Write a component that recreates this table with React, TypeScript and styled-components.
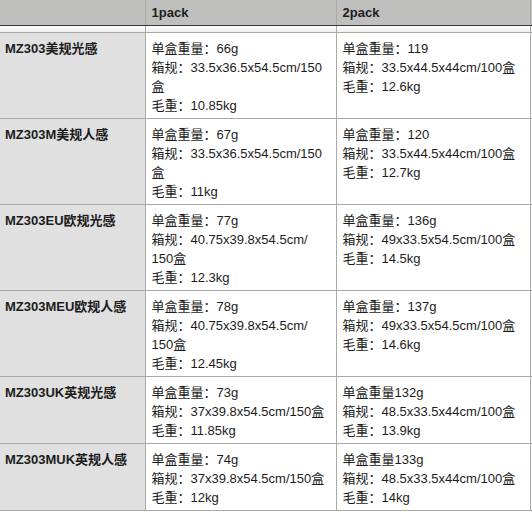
import React from "react";
import styled, { createGlobalStyle } from "styled-components";

type Row = {
  label: string;
  packs: string[][];
};

// "/" gets a zero-width space so long box sizes can wrap after it
const rows: Row[] = [
  {
    label: "MZ303美规光感",
    packs: [
      ["单盒重量：66g", "箱规：33.5x36.5x54.5cm/\u200b150盒", "毛重：10.85kg"],
      ["单盒重量：119", "箱规：33.5x44.5x44cm/\u200b100盒", "毛重：12.6kg"],
    ],
  },
  {
    label: "MZ303M美规人感",
    packs: [
      ["单盒重量：67g", "箱规：33.5x36.5x54.5cm/\u200b150盒", "毛重：11kg"],
      ["单盒重量：120", "箱规：33.5x44.5x44cm/\u200b100盒", "毛重：12.7kg"],
    ],
  },
  {
    label: "MZ303EU欧规光感",
    packs: [
      ["单盒重量：77g", "箱规：40.75x39.8x54.5cm/\u200b150盒", "毛重：12.3kg"],
      ["单盒重量：136g", "箱规：49x33.5x54.5cm/\u200b100盒", "毛重：14.5kg"],
    ],
  },
  {
    label: "MZ303MEU欧规人感",
    packs: [
      ["单盒重量：78g", "箱规：40.75x39.8x54.5cm/\u200b150盒", "毛重：12.45kg"],
      ["单盒重量：137g", "箱规：49x33.5x54.5cm/\u200b100盒", "毛重：14.6kg"],
    ],
  },
  {
    label: "MZ303UK英规光感",
    packs: [
      ["单盒重量：73g", "箱规：37x39.8x54.5cm/\u200b150盒", "毛重：11.85kg"],
      ["单盒重量132g", "箱规：48.5x33.5x44cm/\u200b100盒", "毛重：13.9kg"],
    ],
  },
  {
    label: "MZ303MUK英规人感",
    packs: [
      ["单盒重量：74g", "箱规：37x39.8x54.5cm/\u200b150盒", "毛重：12kg"],
      ["单盒重量133g", "箱规：48.5x33.5x44cm/\u200b100盒", "毛重：14kg"],
    ],
  },
];

const GlobalStyle = createGlobalStyle`
  html, body {
    margin: 0;
    padding: 0;
    background: #ffffff;
    overflow: hidden;
  }
  body {
    font-family: "Liberation Sans", "Noto Sans CJK SC", sans-serif;
    color: #1c1c1c;
  }
`;

const Sheet = styled.table`
  border-collapse: collapse;
  table-layout: fixed;
  width: 532px;
  font-size: 13px;
  line-height: 19px;
`;

// HEADER
const HeaderCell = styled.th`
  height: 25px;
  padding: 0 6px;
  background: #bfc0be;
  border-left: 1px solid #a9aaa8;
  border-bottom: 1px solid #3c3c3c;
  text-align: left;
  font-weight: 700;
  font-size: 13px;
  &:first-child {
    border-left: none;
  }
`;

const SpacerCell = styled.td`
  height: 6px;
  padding: 0;
  background: linear-gradient(#ffffff, #ededed);
  border-left: 1px solid #a9aaa8;
  border-bottom: 1px solid #a9aaa8;
  &:first-child {
    border-left: none;
  }
`;

// BODY
const LabelCell = styled.td`
  background: #e0e0e0;
  padding: 6px 5px 3px;
  vertical-align: top;
  font-weight: 700;
  white-space: nowrap;
  border-bottom: 1px solid #a9aaa8;
`;

const PackCell = styled.td`
  background: #ffffff;
  padding: 6px 9px 3px 6px;
  vertical-align: top;
  border-left: 1px solid #a9aaa8;
  border-bottom: 1px solid #a9aaa8;
`;

// the next column is cut off by the window edge
const EdgeCell = styled.td`
  padding: 0;
  background: #ffffff;
  border-left: 1px solid #a9aaa8;
  border-bottom: 1px solid #a9aaa8;
`;

const Line = styled.div`
  display: block;
`;

const App: React.FC = () => {
  return (
    <>
      <GlobalStyle />
      <Sheet>
        <colgroup>
          <col style={{ width: 145 }} />
          <col style={{ width: 191 }} />
          <col style={{ width: 194 }} />
          <col style={{ width: 2 }} />
        </colgroup>
        <thead>
          <tr>
            <HeaderCell />
            <HeaderCell>1pack</HeaderCell>
            <HeaderCell>2pack</HeaderCell>
            <HeaderCell style={{ padding: 0 }} />
          </tr>
          <tr>
            <SpacerCell />
            <SpacerCell />
            <SpacerCell />
            <SpacerCell />
          </tr>
        </thead>
        <tbody>
          {rows.map((row) => (
            <tr key={row.label}>
              <LabelCell>{row.label}</LabelCell>
              {row.packs.map((lines, i) => (
                <PackCell key={i}>
                  {lines.map((line) => (
                    <Line key={line}>{line}</Line>
                  ))}
                </PackCell>
              ))}
              <EdgeCell />
            </tr>
          ))}
        </tbody>
      </Sheet>
    </>
  );
};

export default App;
